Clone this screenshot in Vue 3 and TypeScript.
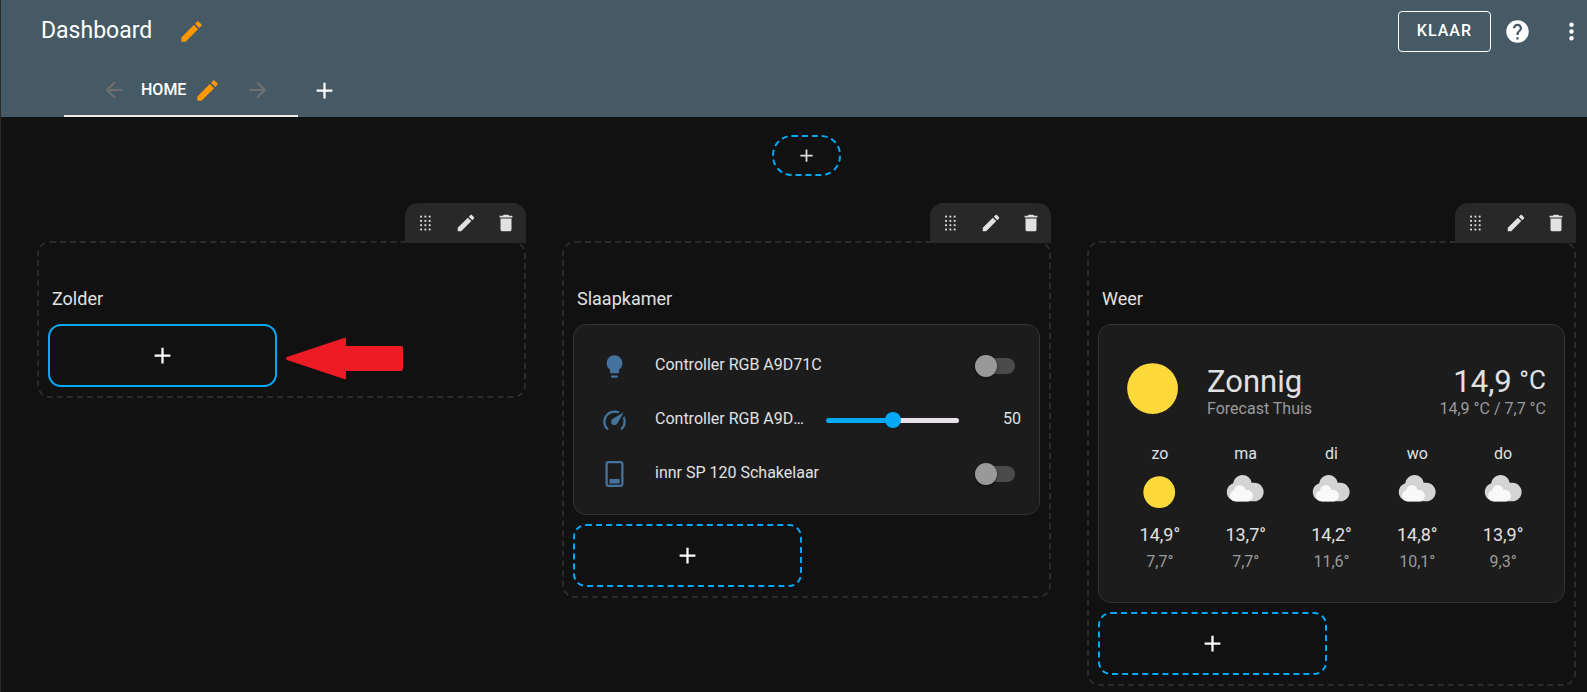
<script setup lang="ts">
import { computed, ref } from 'vue'

interface Section {
  id: string
  title: string
  kind: 'empty' | 'entities' | 'weather'
}

interface Day {
  name: string
  sunny: boolean
  high: string
  low: string
}

const icons = {
  pencil:
    'M20.71,7.04C21.1,6.65 21.1,6 20.71,5.63L18.37,3.29C18,2.9 17.35,2.9 16.96,3.29L15.12,5.12L18.87,8.87M3,17.25V21H6.75L17.81,9.93L14.06,6.18L3,17.25Z',
  plus: 'M19,13H13V19H11V13H5V11H11V5H13V11H19V13Z',
  left: 'M20,11V13H8L13.5,18.5L12.08,19.92L4.16,12L12.08,4.08L13.5,5.5L8,11H20Z',
  right: 'M4,11V13H16L10.5,18.5L11.92,19.92L19.84,12L11.92,4.08L10.5,5.5L16,11H4Z',
  help: 'M15.07,11.25L14.17,12.17C13.45,12.89 13,13.5 13,15H11V14.5C11,13.39 11.45,12.39 12.17,11.67L13.41,10.41C13.78,10.05 14,9.55 14,9C14,7.89 13.1,7 12,7A2,2 0 0,0 10,9H8A4,4 0 0,1 12,5A4,4 0 0,1 16,9C16,9.88 15.64,10.67 15.07,11.25M13,19H11V17H13M12,2A10,10 0 0,0 2,12A10,10 0 0,0 12,22A10,10 0 0,0 22,12C22,6.47 17.5,2 12,2Z',
  dots: 'M12,16A2,2 0 0,1 14,18A2,2 0 0,1 12,20A2,2 0 0,1 10,18A2,2 0 0,1 12,16M12,10A2,2 0 0,1 14,12A2,2 0 0,1 12,14A2,2 0 0,1 10,12A2,2 0 0,1 12,10M12,4A2,2 0 0,1 14,6A2,2 0 0,1 12,8A2,2 0 0,1 10,6A2,2 0 0,1 12,4Z',
  trash: 'M19,4H15.5L14.5,3H9.5L8.5,4H5V6H19M6,19A2,2 0 0,0 8,21H16A2,2 0 0,0 18,19V7H6V19Z',
  bulb: 'M12,2A7,7 0 0,0 5,9C5,11.38 6.19,13.47 8,14.74V17A1,1 0 0,0 9,18H15A1,1 0 0,0 16,17V14.74C17.81,13.47 19,11.38 19,9A7,7 0 0,0 12,2M9,21A1,1 0 0,0 10,22H14A1,1 0 0,0 15,21V20H9V21Z',
  gauge:
    'M12,16A3,3 0 0,1 9,13C9,11.88 9.61,10.9 10.5,10.39L20.21,4.77L14.68,14.35C14.18,15.33 13.17,16 12,16M12,3C13.81,3 15.5,3.5 16.97,4.32L14.87,5.53C14,5.19 13,5 12,5A8,8 0 0,0 4,13C4,15.21 4.89,17.21 6.34,18.65H6.35C6.74,19.04 6.74,19.67 6.35,20.06C5.96,20.45 5.32,20.45 4.93,20.07V20.07C3.12,18.26 2,15.76 2,13A10,10 0 0,1 12,3M22,13C22,15.76 20.88,18.26 19.07,20.07V20.07C18.68,20.45 18.05,20.45 17.66,20.06C17.27,19.67 17.27,19.04 17.66,18.65V18.65C19.11,17.2 20,15.21 20,13C20,12 19.81,11 19.46,10.1L20.67,8C21.5,9.5 22,11.18 22,13Z',
  cloudBack:
    'm3.8863 5.035c-0.54892 0.16898-1.04 0.46637-1.4372 0.8636-0.63077 0.63041-1.0206 1.4933-1.0206 2.455 0 1.9251 1.5589 3.4682 3.4837 3.4682h6.9688c1.9251 0 3.484-1.5981 3.484-3.5232 0-1.9251-1.5589-3.5232-3.484-3.5232h-1.0834c-0.25294-1.6916-1.6986-2.9083-3.4463-2.9083-1.7995 0-3.2805 1.4153-3.465 3.1679',
  cloudFront:
    'm4.1996 7.6995c-0.33902 0.10407-0.64276 0.28787-0.88794 0.5334-0.39017 0.38982-0.63147 0.92322-0.63147 1.5176 0 1.1896 0.96414 2.1431 2.1537 2.1431h4.3071c1.1896 0 2.153-0.98742 2.153-2.1777 0-1.1896-0.96344-2.1777-2.153-2.1777h-0.66992c-0.15593-1.0449-1.0499-1.7974-2.1297-1.7974-1.112 0-2.0274 0.87524-2.1417 1.9586',
}

const sections: Section[] = [
  { id: 'zolder', title: 'Zolder', kind: 'empty' },
  { id: 'slaapkamer', title: 'Slaapkamer', kind: 'entities' },
  { id: 'weer', title: 'Weer', kind: 'weather' },
]

const days: Day[] = [
  { name: 'zo', sunny: true, high: '14,9°', low: '7,7°' },
  { name: 'ma', sunny: false, high: '13,7°', low: '7,7°' },
  { name: 'di', sunny: false, high: '14,2°', low: '11,6°' },
  { name: 'wo', sunny: false, high: '14,8°', low: '10,1°' },
  { name: 'do', sunny: false, high: '13,9°', low: '9,3°' },
]

const light = ref(false)
const plug = ref(false)
const level = ref(50)
const levelFill = computed(() => ({ '--fill': `${level.value}%` }))
</script>

<template>
  <div class="app">
    <header class="header">
      <div class="toolbar">
        <h1 class="title">Dashboard</h1>
        <button class="icon-btn accent" aria-label="Titel bewerken">
          <svg class="i27" viewBox="0 0 24 24"><path :d="icons.pencil" /></svg>
        </button>
        <div class="actions">
          <button class="done">KLAAR</button>
          <button class="icon-btn help" aria-label="Help">
            <svg class="i27" viewBox="0 0 24 24"><path :d="icons.help" /></svg>
          </button>
          <button class="icon-btn" aria-label="Menu">
            <svg class="i27" viewBox="0 0 24 24"><path :d="icons.dots" /></svg>
          </button>
        </div>
      </div>
      <nav class="tabs">
        <div class="tab">
          <button class="icon-btn" disabled aria-label="Naar links">
            <svg class="i26" viewBox="0 0 24 24"><path :d="icons.left" /></svg>
          </button>
          <a class="tab-name" href="#home">HOME</a>
          <button class="icon-btn accent" aria-label="Weergave bewerken">
            <svg class="i27" viewBox="0 0 24 24"><path :d="icons.pencil" /></svg>
          </button>
          <button class="icon-btn move-right" disabled aria-label="Naar rechts">
            <svg class="i26" viewBox="0 0 24 24"><path :d="icons.right" /></svg>
          </button>
        </div>
        <button class="icon-btn add-view" aria-label="Weergave toevoegen">
          <svg class="i27" viewBox="0 0 24 24"><path :d="icons.plus" /></svg>
        </button>
      </nav>
    </header>

    <main class="view">
      <button class="add-badge" aria-label="Badge toevoegen">
        <svg class="i21" viewBox="0 0 24 24"><path :d="icons.plus" /></svg>
      </button>

      <div class="sections">
        <div v-for="s in sections" :key="s.id" class="column">
          <div class="section-tools">
            <button class="tool" aria-label="Verplaatsen">
              <svg class="i22" viewBox="0 0 24 24">
                <template v-for="y in 4" :key="y">
                  <rect v-for="x in 3" :key="x" :x="2 + x * 4.7" :y="y * 4.7 - 0.7" width="2" height="2" />
                </template>
              </svg>
            </button>
            <button class="tool" aria-label="Bewerken">
              <svg class="i22" viewBox="0 0 24 24"><path :d="icons.pencil" /></svg>
            </button>
            <button class="tool" aria-label="Verwijderen">
              <svg class="i22" viewBox="0 0 24 24"><path :d="icons.trash" /></svg>
            </button>
          </div>

          <section class="section">
            <h2 class="heading">{{ s.title }}</h2>

            <div v-if="s.kind === 'entities'" class="card entities">
              <div class="row">
                <svg class="entity-icon" viewBox="0 0 24 24"><path :d="icons.bulb" /></svg>
                <label class="name" for="light">Controller RGB A9D71C</label>
                <input id="light" v-model="light" class="switch" type="checkbox" role="switch" />
              </div>
              <div class="row">
                <svg class="entity-icon" viewBox="0 0 24 24"><path :d="icons.gauge" /></svg>
                <label class="name" for="level">Controller RGB A9D71C</label>
                <input id="level" v-model.number="level" class="slider" type="range" min="0" max="100" :style="levelFill" />
                <output class="level" for="level">{{ level }}</output>
              </div>
              <div class="row">
                <svg class="entity-icon" viewBox="0 0 24 24">
                  <rect class="frame" x="5" y="1" width="14" height="21" rx="1.5" />
                  <rect x="7.5" y="16" width="9" height="4" rx="0.5" />
                </svg>
                <label class="name" for="plug">innr SP 120 Schakelaar</label>
                <input id="plug" v-model="plug" class="switch" type="checkbox" role="switch" />
              </div>
            </div>

            <div v-if="s.kind === 'weather'" class="card weather">
              <div class="now">
                <svg class="now-icon" viewBox="0 0 17 17"><circle class="sun" cx="8.4" cy="8.4" r="6" /></svg>
                <div class="info">
                  <div class="big">Zonnig</div>
                  <div class="sub">Forecast Thuis</div>
                </div>
                <div class="info temp">
                  <div class="big">14,9 <span class="unit">°C</span></div>
                  <div class="sub">14,9 °C / 7,7 °C</div>
                </div>
              </div>
              <div class="forecast">
                <div v-for="d in days" :key="d.name" class="day">
                  <div class="day-name">{{ d.name }}</div>
                  <svg class="day-icon" viewBox="0 0 17 17">
                    <circle v-if="d.sunny" class="sun" cx="8.4" cy="8.4" r="6" />
                    <template v-else>
                      <path class="cloud-back" :d="icons.cloudBack" />
                      <path class="cloud-front" :d="icons.cloudFront" />
                    </template>
                  </svg>
                  <div class="high">{{ d.high }}</div>
                  <div class="low">{{ d.low }}</div>
                </div>
              </div>
            </div>

            <button class="add-card" :class="{ active: s.kind === 'empty' }" aria-label="Kaart toevoegen">
              <svg class="i27" viewBox="0 0 24 24"><path :d="icons.plus" /></svg>
            </button>
            <svg v-if="s.kind === 'empty'" class="pointer" viewBox="0 0 118 43">
              <path d="M2,20 L59,1 Q61,0 61,2 V9 H116 Q118,9 118,11 V32 Q118,34 116,34 H61 V41 Q61,43 59,42 L2,23 Q0,21.500 2,20Z" />
            </svg>
          </section>
        </div>
      </div>
    </main>
  </div>
</template>

<style>
body {
  margin: 0;
  background: #111111;
}
</style>

<style scoped>
.app {
  box-sizing: border-box;
  min-height: 100vh;
  border-left: 1px solid #2b2b2b;
  background: #111111;
  color: #e1e1e1;
  font-family: Roboto, "Liberation Sans", sans-serif;
  font-size: 16px;
  line-height: 20px;
}
button {
  font: inherit;
  color: inherit;
  margin: 0;
  padding: 0;
  border: 0;
  background: none;
  display: flex;
  align-items: center;
  justify-content: center;
  cursor: pointer;
}
svg {
  display: block;
  flex: none;
  fill: currentColor;
}
.i21 { width: 21px; height: 21px; }
.i22 { width: 22px; height: 22px; }
.i26 { width: 26px; height: 26px; }
.i27 { width: 27px; height: 27px; }

.header {
  background: #455a64;
  color: #ffffff;
}
.toolbar {
  display: flex;
  align-items: center;
  height: 63px;
  padding-left: 40px;
}
.title {
  margin: 0 26px 0 0;
  padding-bottom: 2px;
  font-size: 23px;
  line-height: 28px;
  font-weight: 400;
}
.accent { color: #ff9800; }
.actions {
  display: flex;
  align-items: center;
  margin-left: auto;
  padding-right: 2px;
}
.done {
  box-sizing: border-box;
  height: 41px;
  padding: 0 18px 2px;
  border: 1px solid #ffffff;
  border-radius: 4px;
  font-weight: 500;
  letter-spacing: 1px;
}
.help { margin: 0 27px 0 13px; }
.tabs {
  display: flex;
  height: 54px;
  padding-left: 63px;
}
.tab {
  display: flex;
  align-items: center;
  padding: 2px 27px 0 37px;
  border-bottom: 2px solid #ececec;
}
.tab button:disabled {
  color: #6f6f6f;
  cursor: default;
}
.tab-name {
  margin: 0 8px 0 14px;
  color: inherit;
  font-weight: 500;
  text-decoration: none;
}
.move-right { margin-left: 24px; }
.add-view { margin-left: 13px; }

.view { padding: 18px 11px 5px 36px; }
.add-badge {
  box-sizing: border-box;
  width: 69px;
  height: 41px;
  margin: 0 auto 27px;
  border: 2px dashed #03a9f4;
  border-radius: 20px;
}
.sections {
  display: grid;
  grid-template-columns: repeat(3, minmax(0, 1fr));
  gap: 36px;
  align-items: start;
}
.column {
  display: flex;
  flex-direction: column;
}
.section-tools {
  display: flex;
  justify-content: space-between;
  align-self: flex-end;
  width: 121px;
  height: 40px;
  margin-bottom: -2px;
  border-radius: 13px 13px 0 0;
  background: #282828;
  z-index: 1;
}
.tool { width: 40px; }
.section {
  position: relative;
  display: flex;
  flex-direction: column;
  gap: 9px;
  padding: 9px;
  border: 2px dashed #2b2b2b;
  border-radius: 13px;
}
.heading {
  display: flex;
  align-items: flex-end;
  box-sizing: border-box;
  height: 63px;
  margin: 0;
  padding: 0 4px 4px;
  font-size: 18px;
  line-height: 24px;
  font-weight: 400;
}
.card {
  border: 1px solid #333333;
  border-radius: 13px;
  background: #1c1c1c;
}
.add-card {
  box-sizing: border-box;
  width: calc((100% - 9px) / 2);
  height: 63px;
  border: 2px dashed #03a9f4;
  border-radius: 13px;
  color: #ffffff;
}
.add-card.active { border-style: solid; }
.pointer {
  position: absolute;
  left: calc(50% + 3px);
  bottom: 16px;
  width: 118px;
  height: 43px;
  fill: #ed1c24;
}

.entities {
  display: flex;
  flex-direction: column;
  gap: 10px;
  padding: 19px 18px 18px;
}
.row {
  display: flex;
  align-items: center;
  height: 44px;
}
.entity-icon {
  width: 27px;
  height: 27px;
  padding: 0 9px;
  margin-right: 18px;
  fill: #44739e;
}
.frame {
  fill: none;
  stroke: #44739e;
  stroke-width: 2;
}
.name {
  flex: 1;
  min-width: 0;
  overflow: hidden;
  padding-bottom: 2px;
  text-overflow: ellipsis;
  white-space: nowrap;
}
.switch {
  appearance: none;
  display: flex;
  align-items: center;
  width: 40px;
  height: 16px;
  margin: 0 6px;
  border-radius: 8px;
  background: #4b4b4b;
}
.switch::before {
  content: "";
  width: 22px;
  height: 22px;
  border-radius: 50%;
  background: #999999;
  box-shadow: 0 1px 3px rgba(0, 0, 0, 0.5);
}
.switch:checked { justify-content: flex-end; }
.slider {
  appearance: none;
  width: 133px;
  height: 5px;
  margin: 0 0 0 18px;
  border-radius: 3px;
  background: linear-gradient(to right, #03a9f4 var(--fill), #e6e0e9 var(--fill));
}
.slider::-webkit-slider-thumb {
  appearance: none;
  width: 16px;
  height: 16px;
  border-radius: 50%;
  background: #03a9f4;
}
.level {
  width: 62px;
  padding-bottom: 2px;
  text-align: right;
}

.weather { padding: 28px 18px 30px; }
.now {
  display: flex;
  align-items: center;
}
.now-icon {
  width: 72px;
  height: 72px;
  margin-right: 18px;
}
.sun { fill: #fdd93c; }
.info { padding-top: 5px; }
.temp {
  margin-left: auto;
  text-align: right;
}
.big {
  font-size: 31px;
  line-height: 34px;
}
.unit {
  font-size: 26px;
  line-height: 24px;
  vertical-align: 3px;
}
.sub { color: #9b9b9b; }
.forecast {
  display: grid;
  grid-template-columns: repeat(5, 1fr);
  margin-top: 19px;
}
.day {
  display: flex;
  flex-direction: column;
  align-items: center;
}
.day-icon {
  width: 45px;
  height: 45px;
  margin: 6px 0 8px;
}
.cloud-back { fill: #d4d4d4; }
.cloud-front { fill: #f9f9f9; }
.high {
  font-size: 18px;
  line-height: 24px;
}
.low {
  margin-top: 5px;
  color: #9b9b9b;
}
</style>
